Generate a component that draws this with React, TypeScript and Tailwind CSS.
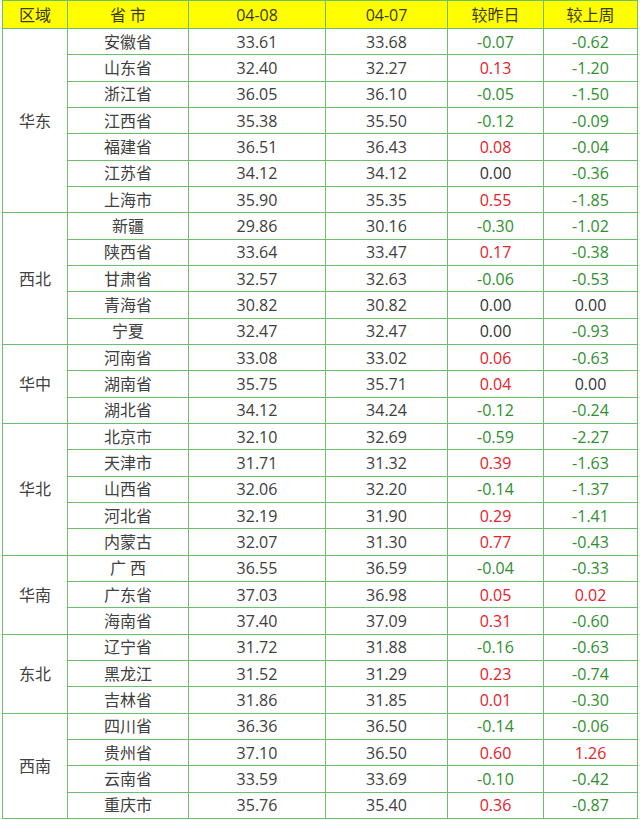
import React from 'react';

type Row = [string, string, string, string, string];

const groups: { region: string; rows: Row[] }[] = [
  {
    region: '华东',
    rows: [
      ['安徽省', '33.61', '33.68', '-0.07', '-0.62'],
      ['山东省', '32.40', '32.27', '0.13', '-1.20'],
      ['浙江省', '36.05', '36.10', '-0.05', '-1.50'],
      ['江西省', '35.38', '35.50', '-0.12', '-0.09'],
      ['福建省', '36.51', '36.43', '0.08', '-0.04'],
      ['江苏省', '34.12', '34.12', '0.00', '-0.36'],
      ['上海市', '35.90', '35.35', '0.55', '-1.85'],
    ],
  },
  {
    region: '西北',
    rows: [
      ['新疆', '29.86', '30.16', '-0.30', '-1.02'],
      ['陕西省', '33.64', '33.47', '0.17', '-0.38'],
      ['甘肃省', '32.57', '32.63', '-0.06', '-0.53'],
      ['青海省', '30.82', '30.82', '0.00', '0.00'],
      ['宁夏', '32.47', '32.47', '0.00', '-0.93'],
    ],
  },
  {
    region: '华中',
    rows: [
      ['河南省', '33.08', '33.02', '0.06', '-0.63'],
      ['湖南省', '35.75', '35.71', '0.04', '0.00'],
      ['湖北省', '34.12', '34.24', '-0.12', '-0.24'],
    ],
  },
  {
    region: '华北',
    rows: [
      ['北京市', '32.10', '32.69', '-0.59', '-2.27'],
      ['天津市', '31.71', '31.32', '0.39', '-1.63'],
      ['山西省', '32.06', '32.20', '-0.14', '-1.37'],
      ['河北省', '32.19', '31.90', '0.29', '-1.41'],
      ['内蒙古', '32.07', '31.30', '0.77', '-0.43'],
    ],
  },
  {
    region: '华南',
    rows: [
      ['广 西', '36.55', '36.59', '-0.04', '-0.33'],
      ['广东省', '37.03', '36.98', '0.05', '0.02'],
      ['海南省', '37.40', '37.09', '0.31', '-0.60'],
    ],
  },
  {
    region: '东北',
    rows: [
      ['辽宁省', '31.72', '31.88', '-0.16', '-0.63'],
      ['黑龙江', '31.52', '31.29', '0.23', '-0.74'],
      ['吉林省', '31.86', '31.85', '0.01', '-0.30'],
    ],
  },
  {
    region: '西南',
    rows: [
      ['四川省', '36.36', '36.50', '-0.14', '-0.06'],
      ['贵州省', '37.10', '36.50', '0.60', '1.26'],
      ['云南省', '33.59', '33.69', '-0.10', '-0.42'],
      ['重庆市', '35.76', '35.40', '0.36', '-0.87'],
    ],
  },
];

// red when up, green when down, plain for zero
function changeColor(v: string) {
  const n = parseFloat(v);
  if (n > 0) return 'text-[#e8202a]';
  if (n < 0) return 'text-[#2f8f2f]';
  return 'text-[#333333]';
}

const cell = 'border border-[#6cbd6c] text-center p-0 leading-none';

export default function App() {
  return (
    <div className="w-[640px] h-[820px] bg-white pl-[2px] font-['Open_Sans','Noto_Sans_CJK_SC',sans-serif] text-[16px] text-[#404040]">
      <table className="table-fixed border-collapse w-[635px]">
        <colgroup>
          <col className="w-[65px]" />
          <col className="w-[121px]" />
          <col className="w-[137px]" />
          <col className="w-[122px]" />
          <col className="w-[96px]" />
          <col className="w-[94px]" />
        </colgroup>
        <thead>
          <tr className="h-[28px] bg-[#ffff00] text-[#3b3b10]">
            <th className={`${cell} font-normal`}>区域</th>
            <th className={`${cell} font-normal`}>省 市</th>
            <th className={`${cell} font-normal`}>04-08</th>
            <th className={`${cell} font-normal`}>04-07</th>
            <th className={`${cell} font-normal`}>较昨日</th>
            <th className={`${cell} font-normal`}>较上周</th>
          </tr>
        </thead>
        <tbody>
          {groups.map((g) =>
            g.rows.map((r, i) => (
              <tr key={g.region + i} className="h-[26.33px]">
                {i === 0 && (
                  <td rowSpan={g.rows.length} className={cell}>
                    {g.region}
                  </td>
                )}
                <td className={cell}>{r[0]}</td>
                <td className={cell}>{r[1]}</td>
                <td className={cell}>{r[2]}</td>
                <td className={`${cell} ${changeColor(r[3])}`}>{r[3]}</td>
                <td className={`${cell} ${changeColor(r[4])}`}>{r[4]}</td>
              </tr>
            ))
          )}
        </tbody>
      </table>
    </div>
  );
}
